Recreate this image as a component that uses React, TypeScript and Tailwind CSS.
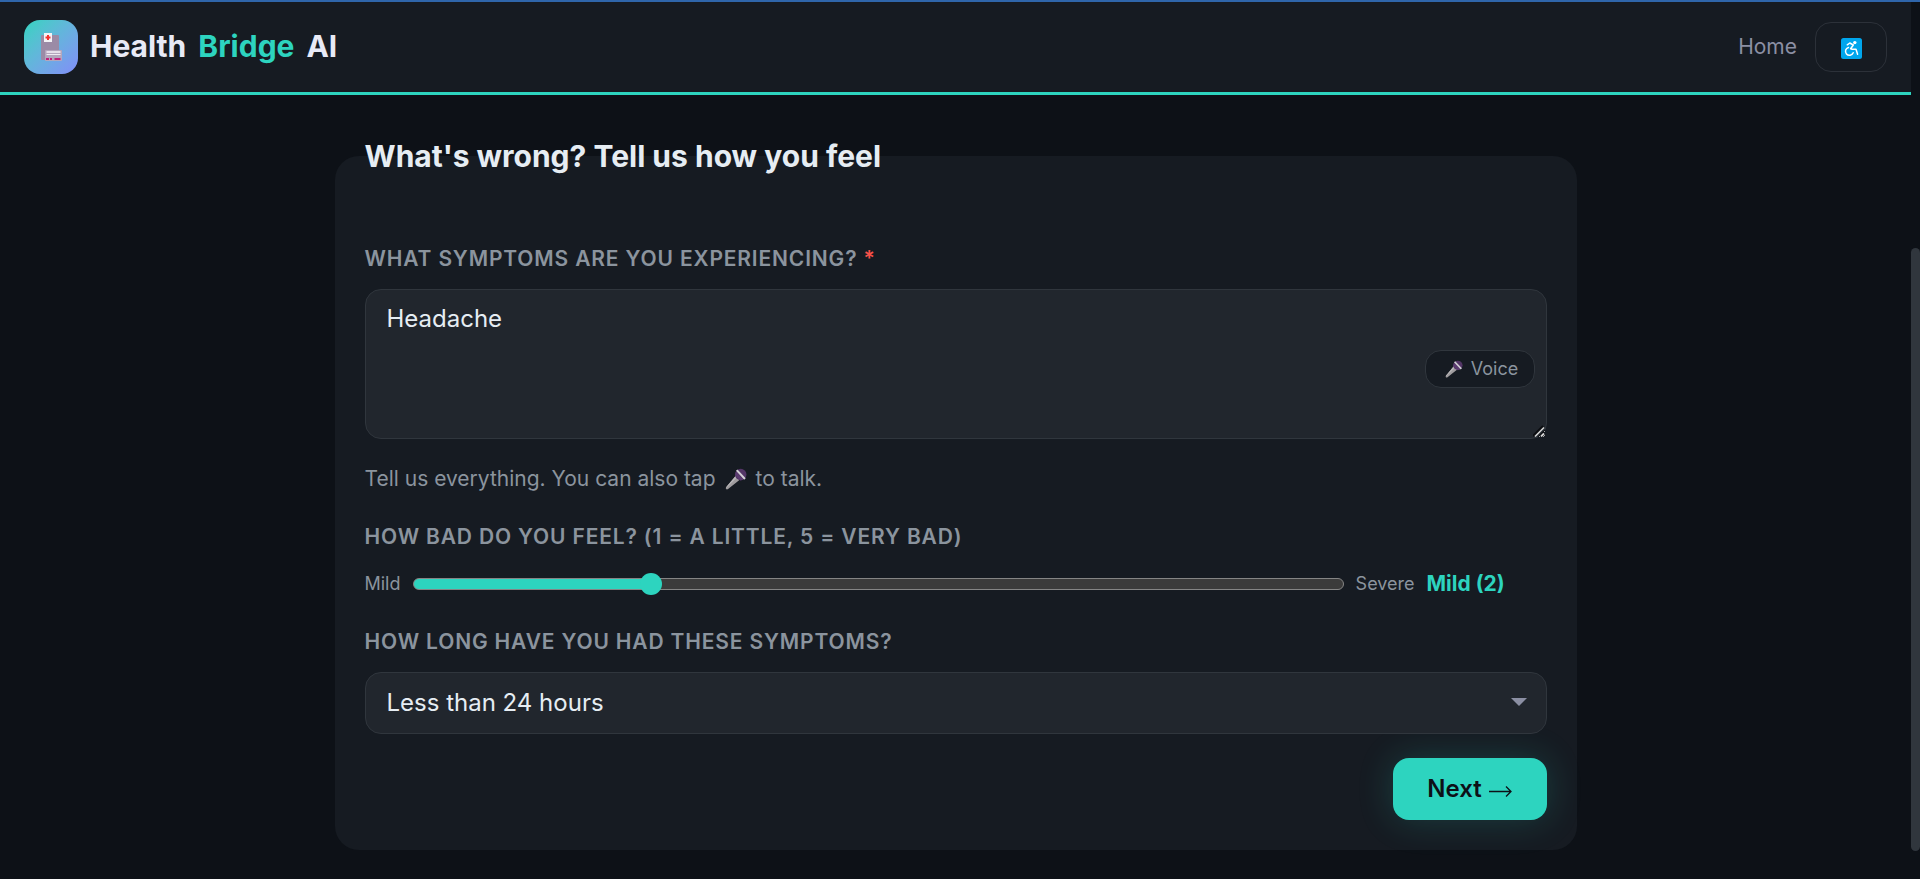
import { useState } from "react";

const LEVELS = ["", "Very Mild", "Mild", "Moderate", "Severe", "Very Severe"];

const labelClass =
  "block text-[21px] leading-8 font-semibold uppercase tracking-[0.04em] text-[#8b949e]";

function HospitalIcon() {
  return (
    <svg viewBox="0 0 24 30" className="h-[30px] w-6" aria-hidden="true">
      <rect x="2" y="3" width="18" height="25" rx="1" fill="#9b8ba6" />
      <rect x="5" y="1" width="8" height="9" fill="#f3f3f6" />
      <path d="M8 3h2v1.500h1.500v2H10V8H8V6.500H6.500v-2H8z" fill="#f8312f" />
      <rect x="6" y="18" width="17" height="11" rx="1" fill="#b4a6bd" />
      <rect x="7.500" y="19" width="14" height="2" fill="#e6dfea" />
      <rect x="7.500" y="22" width="14" height="1" fill="#f0ebf3" />
      <path d="M7 26h3v2H7zM11 26h2v2h-2zM15.500 26h6v2h-6z" fill="#c0217e" />
    </svg>
  );
}

function MicIcon({ className }: { className: string }) {
  return (
    <svg viewBox="0 0 20 20" className={className} aria-hidden="true">
      <path d="M10.200 6.500 14 10.300 2.800 19.200Q1.600 19.900 1 19.100.4 18.400 1 17.400z" fill="#9f9c9e" />
      <path d="M10.200 6.500 11.500 8 1.300 18 1 17.400z" fill="#bab8ba" />
      <circle cx="14.300" cy="5.900" r="5.200" fill="#533566" />
      <path d="M9.200 6.500 10 3.500 16.800 10.600 14 11.400z" fill="#5b3b70" />
      <path d="m10 2.600 1.300-1.300 7.500 8-1.300 1.300z" fill="#d3d0d6" />
    </svg>
  );
}

function WheelchairIcon() {
  return (
    <svg viewBox="0 0 21 21" className="size-[21px]" aria-hidden="true">
      <rect width="21" height="21" rx="2.500" fill="#00a6ed" />
      <circle cx="13.800" cy="4.600" r="1.700" fill="#fff" />
      <path
        d="M6.300 6.800 8.800 5 12.300 7 9.600 10.800M10.800 11.300h4.200L16.600 16.300M7.500 9.400a4 4 0 1 0 4.700 5.400"
        fill="none"
        stroke="#fff"
        strokeWidth="1.500"
        strokeLinecap="round"
        strokeLinejoin="round"
      />
    </svg>
  );
}

export default function App() {
  const [symptoms, setSymptoms] = useState("Headache");
  const [level, setLevel] = useState(2);
  const ratio = (level - 1) / 4;
  const fill = `calc(11px + (100% - 22px) * ${ratio})`;

  return (
    <div className="flex min-h-screen bg-[#0d1117] font-['Inter',sans-serif] text-[#e6edf3]">
      <div className="min-w-0 flex-1">
        <header className="flex h-[95px] items-center justify-between border-t-2 border-b-[3px] border-t-[#2f66ab] border-b-[#2dd4bf] bg-[#161b22] px-6">
          <div className="flex items-center gap-3">
            <div className="flex size-[54px] items-center justify-center rounded-2xl bg-linear-135 from-[#2dd4bf] to-[#818cf8]">
              <HospitalIcon />
            </div>
            <div className="flex gap-3 pb-0.5 text-[30px] leading-9 font-bold text-[#e8eaf6]">
              <span>Health</span>
              <span className="text-[#2dd4bf]">Bridge</span>
              <span>AI</span>
            </div>
          </div>
          <nav className="flex items-center gap-[18px]">
            <a href="#home" className="text-[21px] text-[#8b8fa3]">
              Home
            </a>
            <button
              type="button"
              aria-label="Accessibility"
              className="flex h-[50px] w-[72px] items-center justify-center rounded-2xl border border-[#2c3139] pt-0.5"
            >
              <WheelchairIcon />
            </button>
          </nav>
        </header>

        <main className="mx-auto max-w-[1242px] pt-[39px] pb-[30px]">
          <form onSubmit={(e) => e.preventDefault()}>
            <fieldset className="rounded-3xl bg-[#161b22] p-[30px]">
              <legend className="text-[30px] leading-[44px] font-bold">
                What's wrong? Tell us how you feel
              </legend>

              <div className="pt-[35px]">
                <label htmlFor="symptoms" className={labelClass}>
                  What symptoms are you experiencing? <span className="text-[#f85149]">*</span>
                </label>
                <div className="relative mt-3.5">
                  <textarea
                    id="symptoms"
                    value={symptoms}
                    onChange={(e) => setSymptoms(e.target.value)}
                    className="block h-[150px] w-full resize-y rounded-2xl border border-[#30363d] bg-[#21262d] px-[21px] py-[11px] text-2xl leading-9 outline-none"
                  />
                  <svg
                    viewBox="0 0 12 12"
                    className="pointer-events-none absolute right-0.5 bottom-0.5 size-3"
                    aria-hidden="true"
                  >
                    <path d="M0 11 10 1M7 11l4-4" stroke="#0b0d11" strokeWidth="2" />
                    <path d="M2 11.500 11 2.500" stroke="#d6d6d6" strokeWidth="1.600" />
                    <path d="M8 11.500 11 8.500" stroke="#d6d6d6" strokeWidth="1.800" />
                  </svg>
                  <button
                    type="button"
                    className="absolute top-[61px] right-3 flex h-[38px] w-[110px] items-center justify-center gap-2 rounded-2xl border border-[#30363d] bg-[#161b22] pl-1 text-lg text-[#8b949e]"
                  >
                    <MicIcon className="size-[18px]" />
                    Voice
                  </button>
                </div>
                <p className="mt-6 flex items-center gap-[9px] text-[21px] leading-8 text-[#8b949e]">
                  Tell us everything. You can also tap
                  <MicIcon className="size-[22px]" />
                  to talk.
                </p>
              </div>

              <div className="mt-[26px]">
                <label htmlFor="severity" className={labelClass}>
                  How bad do you feel? (1 = a little, 5 = very bad)
                </label>
                <div className="mt-4 flex items-center gap-3 text-lg leading-[30px] text-[#8b949e]">
                  <span>Mild</span>
                  <input
                    id="severity"
                    type="range"
                    min={1}
                    max={5}
                    value={level}
                    onChange={(e) => setLevel(Number(e.target.value))}
                    style={{
                      backgroundImage: `linear-gradient(to right, #2dd4bf ${fill}, transparent ${fill})`,
                    }}
                    className="h-3 min-w-0 flex-1 appearance-none rounded-full border border-[#858585] bg-[#3b3b3b] bg-origin-border [&::-webkit-slider-thumb]:size-[22px] [&::-webkit-slider-thumb]:appearance-none [&::-webkit-slider-thumb]:rounded-full [&::-webkit-slider-thumb]:bg-[#2dd4bf]"
                  />
                  <span>Severe</span>
                  <output htmlFor="severity" className="w-[120px] text-[21px] leading-[30px] font-bold text-[#2dd4bf]">
                    {LEVELS[level]} ({level})
                  </output>
                </div>
              </div>

              <div className="mt-[27px]">
                <label htmlFor="duration" className={labelClass}>
                  How long have you had these symptoms?
                </label>
                <div className="relative mt-3.5">
                  <select
                    id="duration"
                    className="block h-[62px] w-full appearance-none rounded-2xl border border-[#30363d] bg-[#21262d] px-[21px] text-2xl outline-none"
                  >
                    <option>Less than 24 hours</option>
                    <option>1-3 days</option>
                    <option>4-7 days</option>
                    <option>More than a week</option>
                  </select>
                  <svg
                    viewBox="0 0 16 8"
                    className="pointer-events-none absolute top-[26px] right-5 h-2 w-4"
                    aria-hidden="true"
                  >
                    <path d="M0 0h16L8 8z" fill="#8b8fa3" />
                  </svg>
                </div>
              </div>

              <div className="mt-6 flex justify-end">
                <button
                  type="submit"
                  className="flex h-[62px] w-[154px] items-center justify-center gap-[7px] rounded-2xl bg-[#2dd4bf] text-2xl font-semibold text-[#0d1117] shadow-[0_0_36px_rgba(45,212,191,0.2)]"
                >
                  Next
                  <svg viewBox="0 0 23 16" className="h-4 w-[23px] translate-y-0.5" aria-hidden="true">
                    <path
                      d="M0 8.500h22M17 3.500l5 5-5 5"
                      fill="none"
                      stroke="currentColor"
                      strokeWidth="1.300"
                    />
                  </svg>
                </button>
              </div>
            </fieldset>
          </form>
        </main>
      </div>

      <div className="w-[9px] border-t-2 border-[#2f66ab] pt-[246px]" aria-hidden="true">
        <div className="h-[603px] rounded-full bg-[#30363d]" />
      </div>
    </div>
  );
}
